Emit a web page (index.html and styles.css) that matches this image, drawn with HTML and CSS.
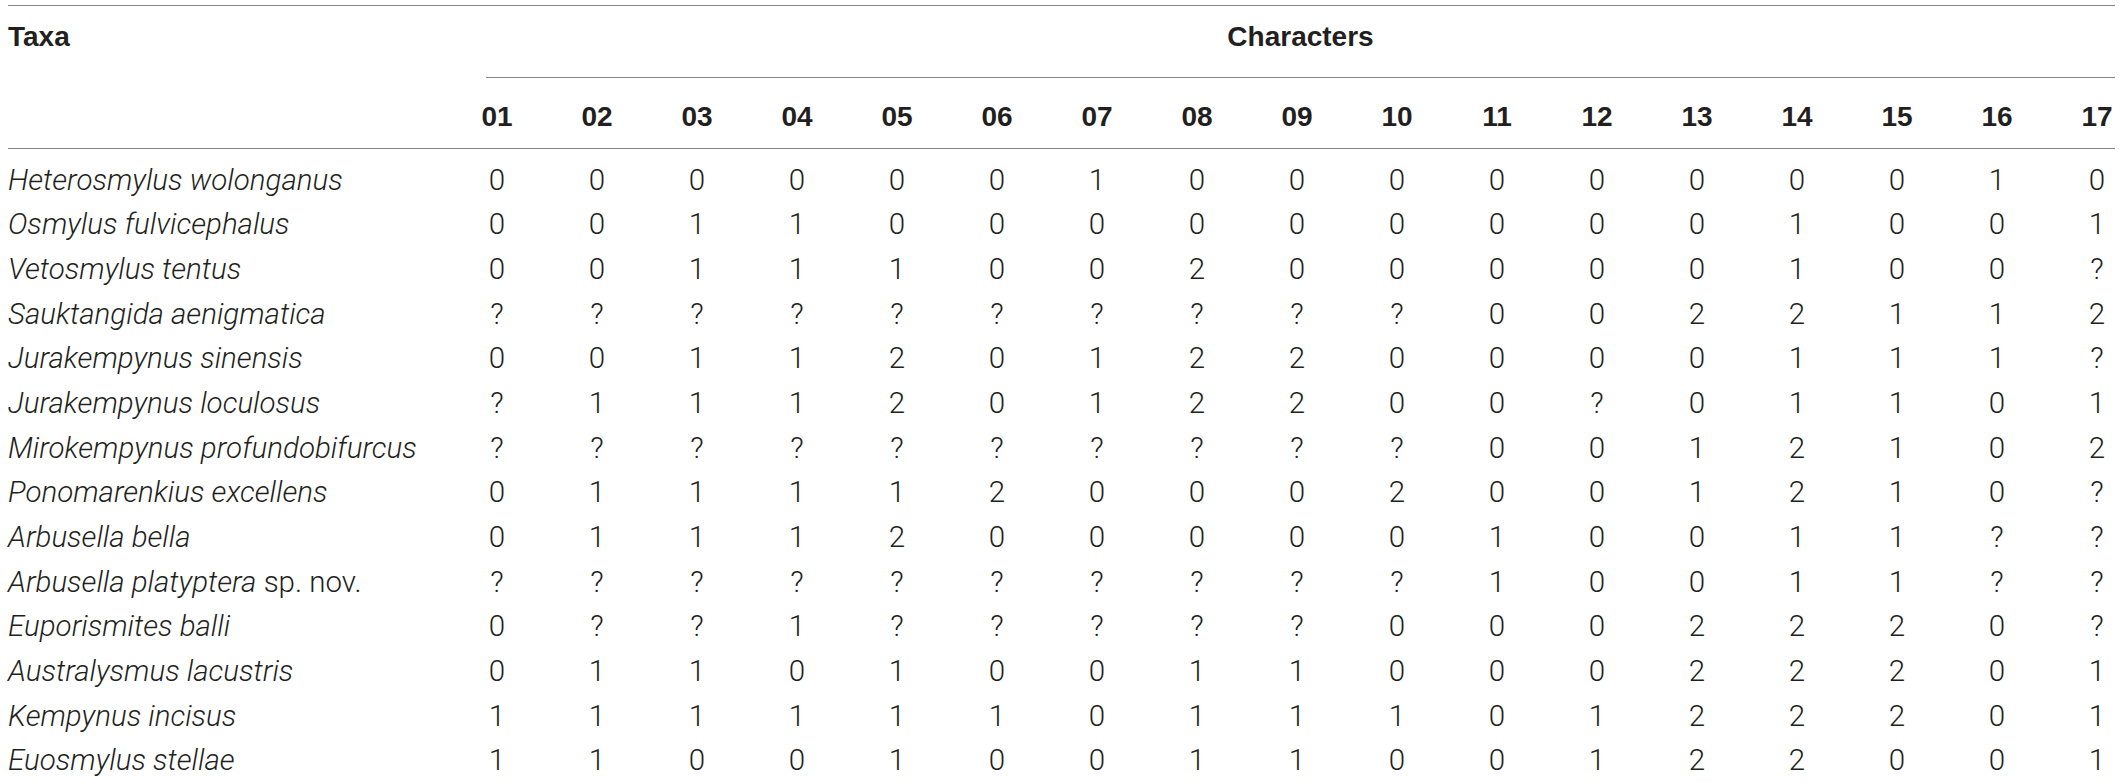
FILE: index.html
```html
<!DOCTYPE html>
<html>
<head>
<meta charset="utf-8">
<link rel="stylesheet" href="styles.css">
</head>
<body>
<div class="table">
  <div class="head">
    <div class="taxa-h">Taxa</div>
    <div class="chars-h">Characters</div>
    <div class="n">01</div><div class="n">02</div><div class="n">03</div><div class="n">04</div><div class="n">05</div><div class="n">06</div><div class="n">07</div><div class="n">08</div><div class="n">09</div><div class="n">10</div><div class="n">11</div><div class="n">12</div><div class="n">13</div><div class="n">14</div><div class="n">15</div><div class="n">16</div><div class="n last">17</div>
  </div>
  <div class="body">
    <div class="row"><div class="name"><i>Heterosmylus wolonganus</i></div><div class="v">0</div><div class="v">0</div><div class="v">0</div><div class="v">0</div><div class="v">0</div><div class="v">0</div><div class="v">1</div><div class="v">0</div><div class="v">0</div><div class="v">0</div><div class="v">0</div><div class="v">0</div><div class="v">0</div><div class="v">0</div><div class="v">0</div><div class="v">1</div><div class="v last">0</div></div>
    <div class="row"><div class="name"><i>Osmylus fulvicephalus</i></div><div class="v">0</div><div class="v">0</div><div class="v">1</div><div class="v">1</div><div class="v">0</div><div class="v">0</div><div class="v">0</div><div class="v">0</div><div class="v">0</div><div class="v">0</div><div class="v">0</div><div class="v">0</div><div class="v">0</div><div class="v">1</div><div class="v">0</div><div class="v">0</div><div class="v last">1</div></div>
    <div class="row"><div class="name"><i>Vetosmylus tentus</i></div><div class="v">0</div><div class="v">0</div><div class="v">1</div><div class="v">1</div><div class="v">1</div><div class="v">0</div><div class="v">0</div><div class="v">2</div><div class="v">0</div><div class="v">0</div><div class="v">0</div><div class="v">0</div><div class="v">0</div><div class="v">1</div><div class="v">0</div><div class="v">0</div><div class="v last">?</div></div>
    <div class="row"><div class="name"><i>Sauktangida aenigmatica</i></div><div class="v">?</div><div class="v">?</div><div class="v">?</div><div class="v">?</div><div class="v">?</div><div class="v">?</div><div class="v">?</div><div class="v">?</div><div class="v">?</div><div class="v">?</div><div class="v">0</div><div class="v">0</div><div class="v">2</div><div class="v">2</div><div class="v">1</div><div class="v">1</div><div class="v last">2</div></div>
    <div class="row"><div class="name"><i>Jurakempynus sinensis</i></div><div class="v">0</div><div class="v">0</div><div class="v">1</div><div class="v">1</div><div class="v">2</div><div class="v">0</div><div class="v">1</div><div class="v">2</div><div class="v">2</div><div class="v">0</div><div class="v">0</div><div class="v">0</div><div class="v">0</div><div class="v">1</div><div class="v">1</div><div class="v">1</div><div class="v last">?</div></div>
    <div class="row"><div class="name"><i>Jurakempynus loculosus</i></div><div class="v">?</div><div class="v">1</div><div class="v">1</div><div class="v">1</div><div class="v">2</div><div class="v">0</div><div class="v">1</div><div class="v">2</div><div class="v">2</div><div class="v">0</div><div class="v">0</div><div class="v">?</div><div class="v">0</div><div class="v">1</div><div class="v">1</div><div class="v">0</div><div class="v last">1</div></div>
    <div class="row"><div class="name"><i>Mirokempynus profundobifurcus</i></div><div class="v">?</div><div class="v">?</div><div class="v">?</div><div class="v">?</div><div class="v">?</div><div class="v">?</div><div class="v">?</div><div class="v">?</div><div class="v">?</div><div class="v">?</div><div class="v">0</div><div class="v">0</div><div class="v">1</div><div class="v">2</div><div class="v">1</div><div class="v">0</div><div class="v last">2</div></div>
    <div class="row"><div class="name"><i>Ponomarenkius excellens</i></div><div class="v">0</div><div class="v">1</div><div class="v">1</div><div class="v">1</div><div class="v">1</div><div class="v">2</div><div class="v">0</div><div class="v">0</div><div class="v">0</div><div class="v">2</div><div class="v">0</div><div class="v">0</div><div class="v">1</div><div class="v">2</div><div class="v">1</div><div class="v">0</div><div class="v last">?</div></div>
    <div class="row"><div class="name"><i>Arbusella bella</i></div><div class="v">0</div><div class="v">1</div><div class="v">1</div><div class="v">1</div><div class="v">2</div><div class="v">0</div><div class="v">0</div><div class="v">0</div><div class="v">0</div><div class="v">0</div><div class="v">1</div><div class="v">0</div><div class="v">0</div><div class="v">1</div><div class="v">1</div><div class="v">?</div><div class="v last">?</div></div>
    <div class="row"><div class="name"><i>Arbusella platyptera</i> sp. nov.</div><div class="v">?</div><div class="v">?</div><div class="v">?</div><div class="v">?</div><div class="v">?</div><div class="v">?</div><div class="v">?</div><div class="v">?</div><div class="v">?</div><div class="v">?</div><div class="v">1</div><div class="v">0</div><div class="v">0</div><div class="v">1</div><div class="v">1</div><div class="v">?</div><div class="v last">?</div></div>
    <div class="row"><div class="name"><i>Euporismites balli</i></div><div class="v">0</div><div class="v">?</div><div class="v">?</div><div class="v">1</div><div class="v">?</div><div class="v">?</div><div class="v">?</div><div class="v">?</div><div class="v">?</div><div class="v">0</div><div class="v">0</div><div class="v">0</div><div class="v">2</div><div class="v">2</div><div class="v">2</div><div class="v">0</div><div class="v last">?</div></div>
    <div class="row"><div class="name"><i>Australysmus lacustris</i></div><div class="v">0</div><div class="v">1</div><div class="v">1</div><div class="v">0</div><div class="v">1</div><div class="v">0</div><div class="v">0</div><div class="v">1</div><div class="v">1</div><div class="v">0</div><div class="v">0</div><div class="v">0</div><div class="v">2</div><div class="v">2</div><div class="v">2</div><div class="v">0</div><div class="v last">1</div></div>
    <div class="row"><div class="name"><i>Kempynus incisus</i></div><div class="v">1</div><div class="v">1</div><div class="v">1</div><div class="v">1</div><div class="v">1</div><div class="v">1</div><div class="v">0</div><div class="v">1</div><div class="v">1</div><div class="v">1</div><div class="v">0</div><div class="v">1</div><div class="v">2</div><div class="v">2</div><div class="v">2</div><div class="v">0</div><div class="v last">1</div></div>
    <div class="row"><div class="name"><i>Euosmylus stellae</i></div><div class="v">1</div><div class="v">1</div><div class="v">0</div><div class="v">0</div><div class="v">1</div><div class="v">0</div><div class="v">0</div><div class="v">1</div><div class="v">1</div><div class="v">0</div><div class="v">0</div><div class="v">1</div><div class="v">2</div><div class="v">2</div><div class="v">0</div><div class="v">0</div><div class="v last">1</div></div>
  </div>
</div>
</body>
</html>
```
FILE: styles.css
```css
html, body {
  margin: 0;
  padding: 0;
  background: #ffffff;
}
body {
  padding: 5px 0 0 8px;
  color: #231f20;
}
.table {
  width: 2107px;
  border-top: 1px solid #858585;
}
.head {
  display: grid;
  grid-template-columns: 439px repeat(16, 100px) 68px;
  grid-template-rows: auto auto;
  border-bottom: 1px solid #858585;
  font-family: "Liberation Sans", Arial, sans-serif;
  font-weight: bold;
  font-size: 28px;
  line-height: 32px;
}
.taxa-h {
  grid-column: 1;
  grid-row: 1 / span 2;
  align-self: start;
  padding-top: 15px;
}
.chars-h {
  grid-column: 2 / span 17;
  grid-row: 1;
  margin-left: 39px;
  padding: 15px 0 24px;
  text-align: center;
  border-bottom: 1px solid #858585;
}
.n {
  grid-row: 2;
  text-align: center;
  padding: 23px 0 15px;
}
.n.last, .v.last {
  padding-left: 32px;
}
.body {
  padding-top: 8.5px;
  font-family: Roboto, "Liberation Sans", sans-serif;
  font-weight: 300;
  font-size: 29.5px;
}
.row {
  display: grid;
  grid-template-columns: 439px repeat(16, 100px) 68px;
  height: 44.7px;
  line-height: 44.7px;
}
.name {
  white-space: nowrap;
}
.v {
  text-align: center;
}
```
